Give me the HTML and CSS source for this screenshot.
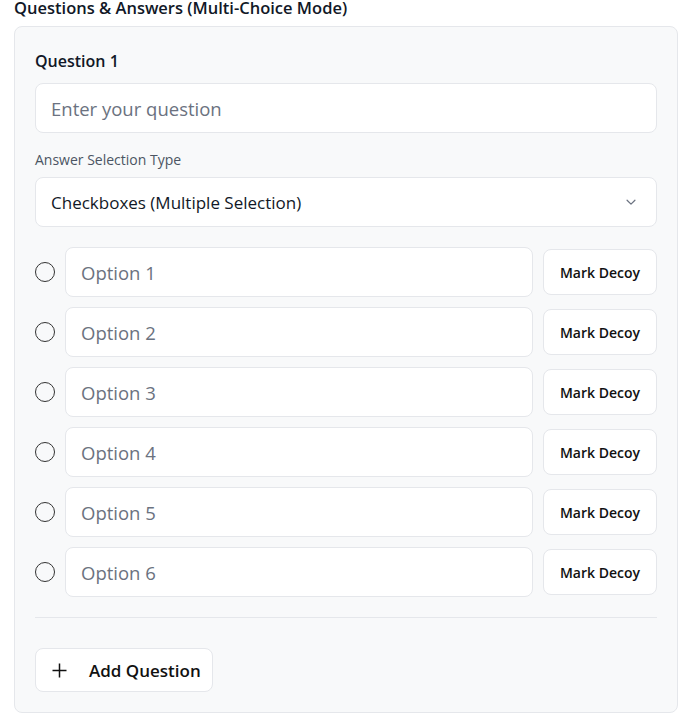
FILE: index.html
```html
<!DOCTYPE html>
<html>
<head>
<meta charset="utf-8">
<link rel="stylesheet" href="styles.css">
</head>
<body>
<h2 class="title">Questions &amp; Answers (Multi-Choice Mode)</h2>
<div class="card">
  <div class="qlabel">Question 1</div>
  <div class="field"><span class="ph">Enter your question</span></div>
  <div class="sublabel">Answer Selection Type</div>
  <div class="field select">
    <span class="val">Checkboxes (Multiple Selection)</span>
    <svg class="chev" width="14" height="14" viewBox="0 0 16 16"><path d="M3.5 6l4.5 4.5L12.5 6" fill="none" stroke="#6b7280" stroke-width="1.4" stroke-linecap="round" stroke-linejoin="round"/></svg>
  </div>
  <div class="options">
    <div class="opt"><span class="radio"></span><div class="field ofield"><span class="ph">Option 1</span></div><button class="decoy">Mark Decoy</button></div>
    <div class="opt"><span class="radio"></span><div class="field ofield"><span class="ph">Option 2</span></div><button class="decoy">Mark Decoy</button></div>
    <div class="opt"><span class="radio"></span><div class="field ofield"><span class="ph">Option 3</span></div><button class="decoy">Mark Decoy</button></div>
    <div class="opt"><span class="radio"></span><div class="field ofield"><span class="ph">Option 4</span></div><button class="decoy">Mark Decoy</button></div>
    <div class="opt"><span class="radio"></span><div class="field ofield"><span class="ph">Option 5</span></div><button class="decoy">Mark Decoy</button></div>
    <div class="opt"><span class="radio"></span><div class="field ofield"><span class="ph">Option 6</span></div><button class="decoy">Mark Decoy</button></div>
  </div>
  <hr class="divider">
  <button class="add">
    <svg width="15" height="15" viewBox="0 0 15 15"><path d="M7.5 0.5v14M0.5 7.5h14" stroke="#111" stroke-width="1.5"/></svg>
    <span>Add Question</span>
  </button>
</div>
</body>
</html>
```
FILE: styles.css
```css
* { box-sizing: border-box; }
body {
  margin: 0;
  padding: 0 12px 0 14px;
  font-family: "Open Sans", "Noto Sans", sans-serif;
  color: #111827;
  background: #fff;
}
.title {
  margin: 0;
  height: 26px;
  font-size: 16.5px;
  font-weight: 600;
  line-height: 16px;
}
.card {
  background: #f8f9fa;
  border: 1px solid #e5e7eb;
  border-radius: 8px;
  padding: 20px;
  margin-top: 0;
  display: flex;
  flex-direction: column;
}
.qlabel {
  font-size: 16px;
  font-weight: 600;
  line-height: 22px;
  margin-top: 3px;
  margin-bottom: 11px;
}
.field {
  height: 50px;
  background: #fff;
  border: 1px solid #e5e7eb;
  border-radius: 8px;
  display: flex;
  align-items: center;
  padding: 0 15px;
}
.ph {
  font-size: 18.5px;
  color: #6b7280;
}
.sublabel {
  font-size: 14px;
  font-weight: 500;
  color: #4b5563;
  margin-top: 18px;
  margin-bottom: 8px;
  line-height: 18px;
}
.select { justify-content: space-between; padding-right: 18px; }
.val { font-size: 17px; color: #111827; }
.options {
  display: flex;
  flex-direction: column;
  gap: 10px;
  margin-top: 20px;
}
.opt {
  display: flex;
  align-items: center;
  gap: 10px;
}
.radio {
  width: 20px;
  height: 20px;
  border: 1.3px solid #333;
  border-radius: 50%;
  flex: none;
}
.ofield { flex: 1; }
.decoy {
  flex: none;
  width: 114px;
  height: 46px;
  background: #fff;
  border: 1px solid #e5e7eb;
  border-radius: 8px;
  font-family: inherit;
  font-size: 14px;
  font-weight: 600;
  color: #111;
}
.divider {
  border: none;
  border-top: 1px solid #e5e7eb;
  margin: 20px 0 30px;
  width: 100%;
}
.add {
  align-self: flex-start;
  display: flex;
  align-items: center;
  gap: 22px;
  width: 178px;
  height: 44px;
  padding: 0 0 0 16px;
  background: #fff;
  border: 1px solid #e5e7eb;
  border-radius: 8px;
  font-family: inherit;
  font-size: 17px;
  font-weight: 600;
  color: #111;
}
```
